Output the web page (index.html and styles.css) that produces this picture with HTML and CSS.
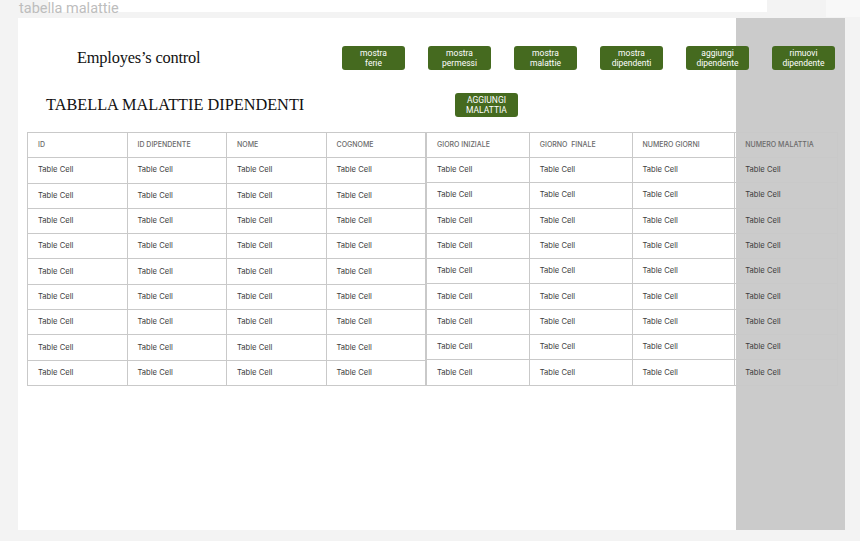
FILE: index.html
```html
<!DOCTYPE html>
<html lang="it">
<head>
<meta charset="utf-8">
<title>tabella malattie</title>
<link rel="stylesheet" href="styles.css">
</head>
<body>
<div class="canvas-top">
  <span class="canvas-label">tabella malattie</span>
  <div class="topbar"></div>
  <div class="topbar-light"></div>
</div>
<main class="frame">
  <div class="row1">
    <h1 class="brand">Employes’s control</h1>
    <nav class="actions">
      <button class="btn">mostra<br>ferie</button>
      <button class="btn">mostra<br>permessi</button>
      <button class="btn">mostra<br>malattie</button>
      <button class="btn">mostra<br>dipendenti</button>
      <button class="btn">aggiungi<br>dipendente</button>
      <button class="btn">rimuovi<br>dipendente</button>
    </nav>
  </div>
  <div class="row2">
    <h2 class="page-title">TABELLA MALATTIE DIPENDENTI</h2>
    <button class="btn">AGGIUNGI<br>MALATTIA</button>
  </div>
  <div class="tables">
    <div class="tbl tbl-left">
      <div class="cell head">ID</div><div class="cell head">ID DIPENDENTE</div><div class="cell head">NOME</div><div class="cell head">COGNOME</div>
      <div class="cell">Table Cell</div><div class="cell">Table Cell</div><div class="cell">Table Cell</div><div class="cell">Table Cell</div>
      <div class="cell">Table Cell</div><div class="cell">Table Cell</div><div class="cell">Table Cell</div><div class="cell">Table Cell</div>
      <div class="cell">Table Cell</div><div class="cell">Table Cell</div><div class="cell">Table Cell</div><div class="cell">Table Cell</div>
      <div class="cell">Table Cell</div><div class="cell">Table Cell</div><div class="cell">Table Cell</div><div class="cell">Table Cell</div>
      <div class="cell">Table Cell</div><div class="cell">Table Cell</div><div class="cell">Table Cell</div><div class="cell">Table Cell</div>
      <div class="cell">Table Cell</div><div class="cell">Table Cell</div><div class="cell">Table Cell</div><div class="cell">Table Cell</div>
      <div class="cell">Table Cell</div><div class="cell">Table Cell</div><div class="cell">Table Cell</div><div class="cell">Table Cell</div>
      <div class="cell">Table Cell</div><div class="cell">Table Cell</div><div class="cell">Table Cell</div><div class="cell">Table Cell</div>
      <div class="cell">Table Cell</div><div class="cell">Table Cell</div><div class="cell">Table Cell</div><div class="cell">Table Cell</div>
    </div>
    <div class="tbl tbl-right">
      <div class="cell head">GIORO INIZIALE</div><div class="cell head">GIORNO&nbsp; FINALE</div><div class="cell head">NUMERO GIORNI</div><div class="cell head">NUMERO MALATTIA</div>
      <div class="cell">Table Cell</div><div class="cell">Table Cell</div><div class="cell">Table Cell</div><div class="cell">Table Cell</div>
      <div class="cell">Table Cell</div><div class="cell">Table Cell</div><div class="cell">Table Cell</div><div class="cell">Table Cell</div>
      <div class="cell">Table Cell</div><div class="cell">Table Cell</div><div class="cell">Table Cell</div><div class="cell">Table Cell</div>
      <div class="cell">Table Cell</div><div class="cell">Table Cell</div><div class="cell">Table Cell</div><div class="cell">Table Cell</div>
      <div class="cell">Table Cell</div><div class="cell">Table Cell</div><div class="cell">Table Cell</div><div class="cell">Table Cell</div>
      <div class="cell">Table Cell</div><div class="cell">Table Cell</div><div class="cell">Table Cell</div><div class="cell">Table Cell</div>
      <div class="cell">Table Cell</div><div class="cell">Table Cell</div><div class="cell">Table Cell</div><div class="cell">Table Cell</div>
      <div class="cell">Table Cell</div><div class="cell">Table Cell</div><div class="cell">Table Cell</div><div class="cell">Table Cell</div>
      <div class="cell">Table Cell</div><div class="cell">Table Cell</div><div class="cell">Table Cell</div><div class="cell">Table Cell</div>
    </div>
  </div>
</main>
</body>
</html>
```
FILE: styles.css
```css
html, body {
  margin: 0;
  padding: 0;
}
body {
  width: 860px;
  height: 541px;
  overflow: hidden;
  background: #f3f3f3;
  font-family: Inter, "Noto Sans", sans-serif;
}
.canvas-top {
  position: relative;
  height: 18px;
  display: flex;
  align-items: flex-start;
}
.canvas-label {
  position: absolute;
  left: 19px;
  top: 0;
  font-family: Roboto, "Liberation Sans", sans-serif;
  font-size: 14.5px;
  line-height: 17px;
  color: #bdbdbd;
}
.topbar {
  margin-left: 48px;
  width: 719px;
  height: 12px;
  background: #ffffff;
}
.topbar-light {
  margin-left: 59px;
  width: 34px;
  height: 17px;
  background: #f8f8f8;
}
.frame {
  display: block;
  margin-left: 18px;
  width: 828px;
  height: 512px;
  box-sizing: border-box;
  padding-top: 28px;
  background: linear-gradient(to right, #ffffff 718px, #cbcbcb 718px 827px, #f3f3f3 827px);
}
.row1 {
  display: flex;
  align-items: center;
  height: 24px;
}
.brand {
  margin: 0;
  width: 324px;
  box-sizing: border-box;
  padding-left: 59px;
  font-family: "Liberation Serif", serif;
  font-weight: 400;
  font-size: 16.4px;
  color: #111;
  letter-spacing: -0.2px;
}
.actions {
  display: flex;
  gap: 23px;
}
.btn {
  width: 63px;
  height: 24px;
  padding: 0;
  border: none;
  border-radius: 3px;
  background: #456a1f;
  color: #ffffff;
  font-family: Roboto, "Liberation Sans", sans-serif;
  font-weight: 400;
  font-size: 8.5px;
  line-height: 10px;
  text-align: center;
}
.row2 {
  display: flex;
  align-items: center;
  height: 24px;
  margin-top: 23px;
}
.page-title {
  margin: 0;
  width: 437px;
  box-sizing: border-box;
  padding-left: 28px;
  font-family: "Liberation Serif", serif;
  font-weight: 400;
  font-size: 16.3px;
  color: #111;
  letter-spacing: 0;
}
.tables {
  display: flex;
  align-items: flex-start;
  margin-left: 9px;
  margin-top: 14.7px;
}
.tbl {
  display: grid;
  border-top: 1px solid #c9c9c9;
  border-left: 1px solid #c9c9c9;
}
.tbl-left {
  grid-template-columns: repeat(4, 99.5px);
  margin-top: 0.3px;
}
.tbl-right {
  grid-template-columns: repeat(4, 102.75px);
}
.cell {
  height: 25.3px;
  box-sizing: border-box;
  border-right: 1px solid #c9c9c9;
  border-bottom: 1px solid #c9c9c9;
  padding-left: 10px;
  padding-bottom: 1px;
  display: flex;
  align-items: center;
  font-size: 7.6px;
  color: #3d3d3d;
  white-space: nowrap;
}
.cell.head {
  font-size: 7px;
  font-weight: 500;
  color: #6a6a6a;
}
```
